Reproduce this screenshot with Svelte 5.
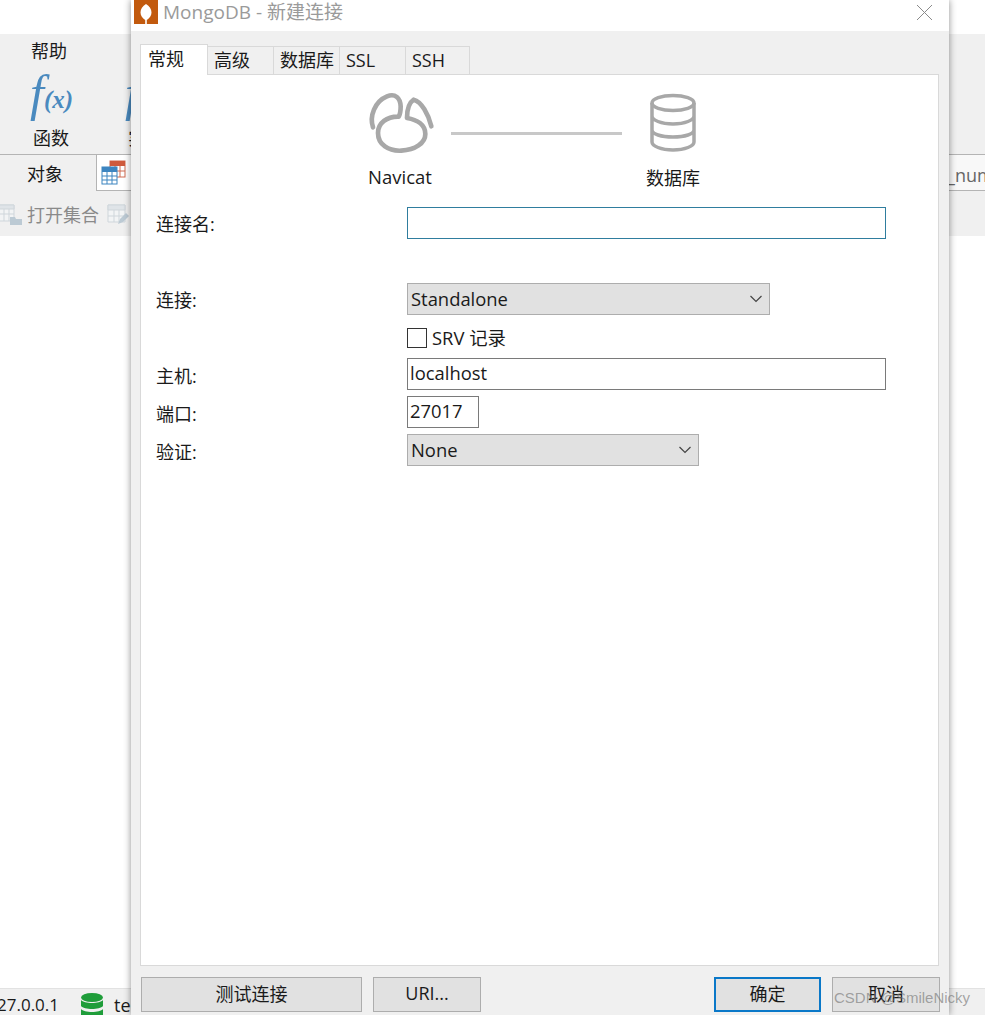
<script>
	const tabs = ['常规', '高级', '数据库', 'SSL', 'SSH'];
</script>

<div class="app">
	<div class="topstrip"></div>
	<div class="toolbar">
		<div class="tool help">
			<span class="menu-label">帮助</span>
			<span class="fx"><i class="f">f</i><i class="x">(x)</i></span>
			<span class="tool-name">函数</span>
		</div>
		<div class="tool second">
			<span class="menu-label">&nbsp;</span>
			<span class="fx"><i class="f">f</i></span>
			<span class="tool-name">实</span>
		</div>
	</div>
	<div class="objtabs">
		<span class="obj">对象</span>
		<div class="tabicon">
			<svg width="26" height="26" viewBox="0 0 26 26">
				<rect x="9" y="1" width="15" height="16" fill="#fff" stroke="#cf6a50" />
				<rect x="9" y="1" width="15" height="5" fill="#cf5a3c" />
				<path d="M14 6v11M19 6v11M9 11h15" stroke="#cf6a50" fill="none" />
				<rect x="1" y="7" width="15" height="17" fill="#fff" stroke="#3d85c0" />
				<rect x="1" y="7" width="15" height="5" fill="#3d85c0" />
				<path d="M6 12v12M11 12v12M1 16h15M1 20h15" stroke="#3d85c0" fill="none" />
			</svg>
		</div>
		<span class="num">_num</span>
	</div>
	<div class="objbar">
		<svg width="22" height="24" viewBox="0 0 22 24">
			<path d="M-2 3h16v16H-2z" fill="#f2f4f5" stroke="#cfd6db" />
			<path d="M-2 3h16v4H-2z" fill="#dfe4e8" stroke="#cfd6db" />
			<path d="M4 7v12M9 7v12M-2 12h16" fill="none" stroke="#cfd6db" />
			<path d="M10 15h5l1 2h6v6H10z" fill="#bccad4" />
		</svg>
		<span class="open">打开集合</span>
		<svg class="edit" width="22" height="24" viewBox="0 0 22 24">
			<path d="M1 3h17v17H1z" fill="#f2f4f5" stroke="#cfd6db" />
			<path d="M1 3h17v5H1z" fill="#dfe4e8" stroke="#cfd6db" />
			<path d="M7 8v12M12 8v12M1 14h17" fill="none" stroke="#cfd6db" />
			<path d="M11 22l2-5 6-6 3 3-6 6z" fill="#bccad4" />
		</svg>
	</div>
	<div class="content"></div>
	<div class="status">
		<span class="ip">27.0.0.1</span>
		<svg class="statusdb" width="24" height="26" viewBox="0 0 24 26">
			<ellipse cx="12" cy="4.500" rx="11" ry="4.500" fill="#1f9d3a" />
			<path d="M1 7c3 4 19 4 22 0v6c-3 4-19 4-22 0zM1 16c3 4 19 4 22 0v6c-3 4-19 4-22 0z" fill="#1f9d3a" />
		</svg>
		<span class="te">te</span>
	</div>

	<div class="dialog">
		<div class="titlebar">
			<svg class="logo" width="24" height="24" viewBox="0 0 24 24">
				<rect width="24" height="24" fill="#c25a0e" />
				<path d="M12 4c3.500 2 5.500 5 5.500 8.500 0 3-2 6-4.700 7.500v4h-1.600v-4C8.500 18.500 6.500 15.500 6.500 12.500 6.500 9 8.500 6 12 4z" fill="#fff" />
			</svg>
			<span class="title">MongoDB - 新建连接</span>
			<svg class="close" width="17" height="17" viewBox="0 0 17 17">
				<path d="M1 1l15 15M16 1L1 16" stroke="#8a8a8a" stroke-width="1" fill="none" />
			</svg>
		</div>

		<div class="tabs">
			{#each tabs as tab, i}
				<div class="tab" class:active={i === 0}>{tab}</div>
			{/each}
		</div>

		<div class="panel">
			<div class="diagram">
				<div class="node">
					<svg class="navicat" width="76" height="70" viewBox="0 0 228 210">
						<path d="M33 118C22 85 38 40 75 25 100 15 115 30 116 55 116 70 114 80 110 86 75 85 48 105 48 135 48 170 80 190 118 188 160 186 190 165 190 138 190 110 165 95 135 90 135 70 140 45 155 35 178 40 200 80 208 115" fill="none" stroke="#a8a8a8" stroke-width="14" stroke-linecap="round" stroke-linejoin="round" />
					</svg>
					<span>Navicat</span>
				</div>
				<div class="link"></div>
				<div class="node">
					<svg class="dbicon" width="48" height="60" viewBox="0 0 48 60">
						<ellipse cx="24" cy="10" rx="21" ry="7.500" fill="none" stroke="#a8a8a8" stroke-width="3.500" />
						<path d="M3 10v39c0 4 9 8 21 8s21-4 21-8V10M3 23c0 4 9 8 21 8s21-4 21-8M3 37c0 4 9 7 21 7s21-3 21-7" fill="none" stroke="#a8a8a8" stroke-width="3.500" />
					</svg>
					<span>数据库</span>
				</div>
			</div>

			<div class="form">
				<label class="first" for="conn-name">连接名:</label>
				<input id="conn-name" class="wide focused" value="" />

				<div class="spacer"></div>

				<span class="lbl first">连接:</span>
				<div class="select standalone">
					<span>Standalone</span>
					<svg width="14" height="8" viewBox="0 0 14 8"><path d="M1.500 1l5.500 5.500L12.500 1" fill="none" stroke="#444" stroke-width="1.200" /></svg>
				</div>

				<span></span>
				<div class="srv"><span class="check"></span><span class="srv-text">SRV 记录</span></div>

				<label for="host">主机:</label>
				<input id="host" class="wide" value="localhost" />

				<label for="port">端口:</label>
				<input id="port" class="port" value="27017" />

				<span class="lbl">验证:</span>
				<div class="select auth">
					<span>None</span>
					<svg width="14" height="8" viewBox="0 0 14 8"><path d="M1.500 1l5.500 5.500L12.500 1" fill="none" stroke="#444" stroke-width="1.200" /></svg>
				</div>
			</div>
		</div>

		<div class="footer">
			<button class="test">测试连接</button>
			<button class="uri">URI...</button>
			<button class="ok">确定</button>
			<button class="cancel">取消</button>
		</div>
	</div>

	<div class="watermark">CSDN @SmileNicky</div>
</div>

<style>
	:global(body) {
		margin: 0;
		background: #fff;
	}

	.app {
		position: relative;
		width: 985px;
		height: 1015px;
		overflow: hidden;
		display: flex;
		flex-direction: column;
		font-family: "Open Sans", "Noto Sans CJK SC", sans-serif;
		font-size: 18px;
		color: #1a1a1a;
	}

	.topstrip {
		height: 34px;
		background: #fff;
	}

	.toolbar {
		height: 120px;
		background: #f0f0f0;
		display: flex;
		box-sizing: border-box;
		padding-left: 30px;
	}

	.tool {
		display: flex;
		flex-direction: column;
		line-height: 24px;
	}

	.help {
		width: 42px;
	}

	.menu-label {
		margin: 5px 0 0 1px;
		height: 24px;
	}

	.tool-name {
		margin: 8px 0 0 3px;
	}

	.second {
		margin-left: 53px;
	}

	.fx {
		height: 55px;
		display: flex;
		align-items: flex-end;
		font-family: "Liberation Serif", serif;
		color: #4a8abf;
		white-space: nowrap;
		line-height: 1;
	}

	.fx .f {
		font-size: 50px;
	}

	.fx .x {
		font-size: 25px;
		font-weight: bold;
		margin-bottom: 6px;
	}

	.objtabs {
		height: 37px;
		box-sizing: border-box;
		background: #f0f0f0;
		border-top: 1px solid #b4b4b4;
		display: flex;
		align-items: center;
		position: relative;
	}

	.obj {
		width: 96px;
		text-align: center;
		box-sizing: border-box;
		padding-right: 6px;
	}

	.tabicon {
		height: 37px;
		margin-top: -1px;
		width: 60px;
		box-sizing: border-box;
		border: 1px solid #b4b4b4;
		background: #fff;
		padding: 5px 0 0 4px;
	}

	.num {
		margin-left: auto;
		height: 37px;
		box-sizing: border-box;
		margin-top: -1px;
		width: 43px;
		padding: 7px 0 0 5px;
		background: #f8f8f8;
		color: #666;
		border-top: 1px solid #b4b4b4;
		border-bottom: 1px solid #b4b4b4;
		line-height: 26px;
		overflow: hidden;
	}

	.objbar {
		height: 45px;
		background: #f0f0f0;
		display: flex;
		align-items: center;
		color: #8a8a8a;
	}

	.open {
		margin-left: 5px;
	}

	.edit {
		margin-left: 8px;
	}

	.content {
		flex: 1;
		background: #fff;
	}

	.status {
		height: 27px;
		background: #f0f0f0;
		border-top: 1px solid #e2e2e2;
		box-sizing: border-box;
		display: flex;
		align-items: flex-start;
		font-size: 17px;
		line-height: 24px;
		padding-top: 4px;
		overflow: hidden;
	}

	.ip {
		width: 80px;
		flex: none;
		margin-left: -3px;
		margin-right: 3px;
	}

	.statusdb {
		flex: none;
	}

	.te {
		margin-left: 10px;
		font-size: 18px;
	}

	/* window over the app, so it sits on its own coordinates */
	.dialog {
		position: absolute;
		left: 131px;
		top: 0;
		width: 818px;
		height: 1015px;
		background: #f0f0f0;
		box-shadow: 0 0 7px rgba(0, 0, 0, 0.45);
		display: flex;
		flex-direction: column;
		box-sizing: border-box;
		padding: 0 9px;
	}

	.titlebar {
		height: 31px;
		margin: 0 -9px;
		background: #fff;
		display: flex;
		align-items: flex-start;
		flex: none;
	}

	.logo {
		margin-left: 3px;
	}

	.title {
		margin-left: 5px;
		font-size: 19px;
		line-height: 24px;
		color: #9a9a9a;
	}

	.close {
		margin-left: auto;
		margin-right: 16px;
		margin-top: 4px;
	}

	.tabs {
		display: flex;
		align-items: flex-end;
		height: 31px;
		margin-top: 13px;
		position: relative;
		z-index: 1;
		flex: none;
		margin-bottom: -1px;
	}

	.tab {
		width: 66px;
		height: 29px;
		box-sizing: border-box;
		border: 1px solid #d9d9d9;
		border-left: 0;
		padding-left: 6px;
		line-height: 26px;
		background: #f0f0f0;
	}

	.tab.active {
		width: 68px;
		height: 31px;
		background: #fff;
		border-left: 1px solid #d9d9d9;
		border-bottom: 0;
		padding-left: 7px;
		line-height: 28px;
	}

	.tab:last-child {
		width: 64px;
	}

	.panel {
		flex: 1;
		background: #fff;
		border: 1px solid #d9d9d9;
		box-sizing: border-box;
		padding: 0 15px;
		margin-right: 1px;
	}

	.diagram {
		height: 132px;
		display: flex;
		align-items: flex-start;
		padding-left: 211px;
		position: relative;
	}

	.node {
		display: flex;
		flex-direction: column;
		align-items: center;
		width: 66px;
		white-space: nowrap;
	}

	.navicat {
		margin-top: 13px;
		flex: none;
	}

	.dbicon {
		margin-top: 18px;
		flex: none;
	}

	.node span {
		line-height: 24px;
	}

	.node:first-child span {
		margin-top: 7px;
		font-size: 18.500px;
	}

	.node:last-child {
		margin-left: 18px;
	}

	.node:last-child span {
		margin-top: 13px;
	}

	.link {
		width: 171px;
		height: 3px;
		margin: 57px 0 0 18px;
		background: #c8c8c8;
		flex: none;
	}

	.form {
		display: grid;
		grid-template-columns: 251px 1fr;
		row-gap: 6px;
		align-items: center;
	}

	.form label,
	.lbl {
		line-height: 24px;
		padding-top: 4px;
	}

	.form .first {
		padding-top: 2px;
	}

	.form input {
		height: 32px;
		box-sizing: border-box;
		border: 1px solid #7a7a7a;
		padding: 0 2px 4px;
		font: inherit;
		font-size: 18.400px;
		color: inherit;
		outline: none;
		background: #fff;
	}

	.wide {
		width: 479px;
	}

	.focused.focused {
		border-color: #2f7d9e;
	}

	.form .port {
		width: 72px;
	}

	.spacer {
		grid-column: 1 / 3;
		height: 32px;
	}

	.select {
		height: 32px;
		box-sizing: border-box;
		background: #e1e1e1;
		border: 1px solid #adadad;
		display: flex;
		align-items: center;
		justify-content: space-between;
		padding: 0 6px 0 3px;
		font-size: 18.400px;
	}

	.select span {
		margin-bottom: 2px;
	}

	.standalone {
		width: 363px;
	}

	.auth {
		width: 292px;
	}

	.srv {
		display: flex;
		align-items: center;
		gap: 5px;
		height: 29px;
		margin-top: 2px;
		font-size: 18.400px;
	}

	.srv-text {
		margin-bottom: 2px;
	}

	.check {
		width: 18px;
		height: 18px;
		border: 1px solid #333;
		background: #fff;
	}

	.footer {
		height: 49px;
		flex: none;
		display: flex;
		padding: 11px 0 0 1px;
		box-sizing: border-box;
	}

	.footer button {
		height: 35px;
		box-sizing: border-box;
		background: #e1e1e1;
		border: 1px solid #adadad;
		font: inherit;
		color: inherit;
		padding: 0 0 4px;
	}

	.test {
		width: 221px;
	}

	.uri {
		width: 108px;
		margin-left: 11px;
	}

	.footer .ok {
		width: 107px;
		margin-left: auto;
		border: 2px solid #0a78c8;
	}

	.cancel {
		width: 108px;
		margin-left: 11px;
	}

	.watermark {
		position: absolute;
		left: 834px;
		top: 989px;
		font-family: "Liberation Sans", sans-serif;
		font-size: 15px;
		line-height: 18px;
		color: rgba(120, 120, 120, 0.65);
		white-space: nowrap;
	}
</style>
